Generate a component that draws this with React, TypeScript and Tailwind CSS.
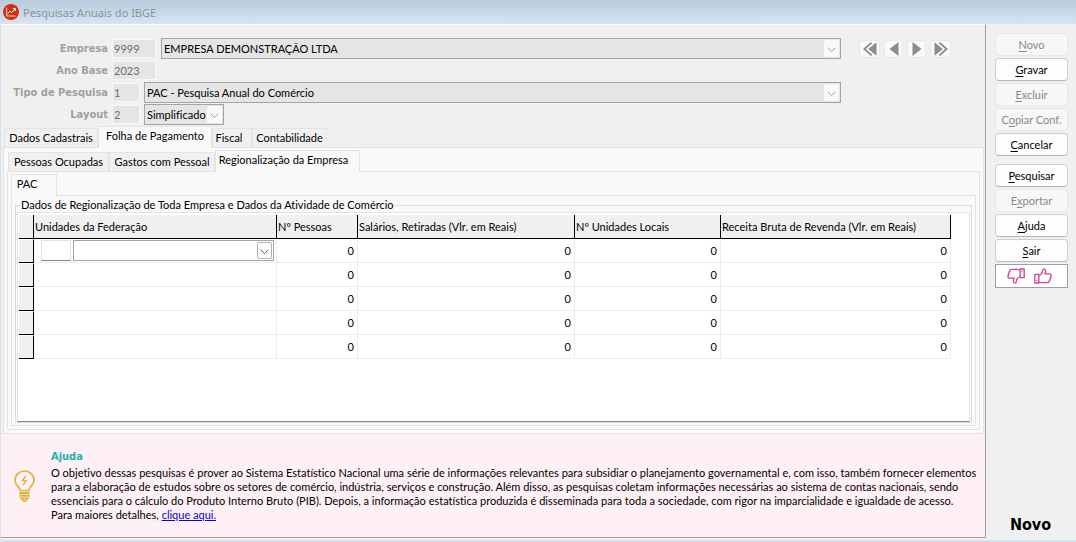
import type { ReactNode } from "react";

function Chevron({ muted }: { muted?: boolean }) {
  return (
    <svg viewBox="0 0 9 6" className="h-[6px] w-[9px]" fill="none" stroke={muted ? "#a0a0a0" : "#555555"}>
      <path d="M0.7 0.8 4.5 4.6 8.3 0.8" />
    </svg>
  );
}

function Combo({ id, label, value, disabled, className }: {
  id: string;
  label: string;
  value: string;
  disabled?: boolean;
  className: string;
}) {
  return (
    <span className={`relative flex ${className}`}>
      <select
        id={id}
        aria-label={label}
        disabled={disabled}
        className="h-[21px] w-full appearance-none border border-[#a3a3a8] bg-white pl-[2px] text-black opacity-100 disabled:bg-[#e5e5e5]"
      >
        <option>{value}</option>
      </select>
      <span
        className={`pointer-events-none absolute inset-y-[2px] right-[2px] flex w-[15px] items-center justify-center rounded-[2px] pt-[2px] ${
          disabled ? "bg-[#f9f9f9]" : "border border-[#b4b4b4] bg-[#fdfdfd]"
        }`}
      >
        <Chevron muted={disabled} />
      </span>
    </span>
  );
}

function FieldRow({ id, label, value, inputClass, children }: {
  id: string;
  label: string;
  value: string;
  inputClass: string;
  children?: ReactNode;
}) {
  return (
    <div className="flex h-[21px] items-center">
      <label
        htmlFor={id}
        className="w-[107px] shrink-0 text-right font-['DejaVu_Sans_Condensed','DejaVu_Sans',sans-serif] font-bold text-[#a0a0a0]"
      >
        {label}
      </label>
      <input
        id={id}
        defaultValue={value}
        disabled
        className={`ml-[4px] h-[19px] shrink-0 border border-[#f7f7f7] bg-[#e5e5e5] px-px text-[#6d6d6d] ${inputClass}`}
      />
      {children}
    </div>
  );
}

function Tabs({ items, active }: { items: [string, string][]; active: number }) {
  return (
    <div role="tablist" className="flex h-[22px] items-end">
      {items.map(([text, width], i) => (
        <button
          key={text}
          role="tab"
          aria-selected={i === active}
          className={
            i === active
              ? `relative -mb-px h-[22px] whitespace-nowrap border border-b-0 border-[#e3e3e3] bg-[#f9f9f9] pb-[3px] ${width}`
              : `h-[19px] whitespace-nowrap border border-b-0 border-[#e3e3e3] bg-[#f0f0f0] pb-px ${width}`
          }
        >
          {text}
        </button>
      ))}
    </div>
  );
}

type NavKind = "first" | "prev" | "next" | "last";

function NavButton({ kind, label }: { kind: NavKind; label: string }) {
  const double = kind === "first" || kind === "last";
  const flip = kind === "next" || kind === "last";
  return (
    <button
      type="button"
      aria-label={label}
      disabled
      className={`flex h-[18px] items-center justify-center rounded-[3px] border border-[#e8e8e8] bg-[#f9f9f9] ${
        double ? "w-[21px]" : "w-[19px]"
      }`}
    >
      <svg viewBox="0 0 14 14" className={`h-[14px] w-[14px] shrink-0 ${flip ? "-scale-x-100" : ""}`}>
        {double ? (
          <>
            <path d="M13.5 0.3V13.7L5.2 7Z" fill="#8c8c8c" />
            <path d="M8.6 0.6 1.4 7l7.2 6.4" fill="none" stroke="#8c8c8c" strokeWidth="1.8" />
          </>
        ) : (
          <path d="M11.5 0V14L2.5 7Z" fill="#8c8c8c" />
        )}
      </svg>
    </button>
  );
}

function ActionButton({ before, hot, after, disabled, className = "" }: {
  before?: string;
  hot: string;
  after: string;
  disabled?: boolean;
  className?: string;
}) {
  return (
    <button
      disabled={disabled}
      className={`h-[23px] w-full whitespace-nowrap rounded-[4px] border ${
        disabled
          ? "border-[#e8e8e8] bg-[#f7f7f7] text-[#888888]"
          : "border-[#cfcfcf] border-b-[#b5b5b5] bg-[#fdfdfd] text-black"
      } ${className}`}
    >
      {before}
      <u className="underline-offset-2">{hot}</u>
      {after}
    </button>
  );
}

function Thumb({ down }: { down?: boolean }) {
  return (
    <svg
      viewBox="0 0 18 16"
      className={`h-[16px] w-[18px] ${down ? "rotate-180" : ""}`}
      fill="none"
      stroke="#d6428f"
      strokeWidth="1.3"
      strokeLinejoin="round"
    >
      <path d="M0.8 6.3H4.8V15H0.8Z" />
      <path d="M4.8 7.5C7 6.8 8.7 4.8 8.8 2C8.9 0.6 11.4 0.4 11.6 2.6C11.7 3.9 11.3 5 10.9 5.9H15.8C17.3 5.9 17.6 7.9 16.4 8.4C17.1 9.3 16.8 10.4 15.9 10.7C16.4 11.7 16 12.5 15.1 12.8C15.4 13.9 14.8 14.7 13.7 14.7H8C6.6 14.7 6 13.9 4.8 13.8" />
      <path d="M2.8 12.3V13.3" />
    </svg>
  );
}

const columns: [string, string][] = [
  ["Unidades da Federação", "w-[243px]"],
  ["Nº Pessoas", "w-[81px]"],
  ["Salários, Retiradas (Vlr. em Reais)", "w-[217px]"],
  ["Nº Unidades Locais", "w-[146px]"],
  ["Receita Bruta de Revenda (Vlr. em Reais)", "w-[230px]"],
];

const rows = [
  [0, 0, 0, 0],
  [0, 0, 0, 0],
  [0, 0, 0, 0],
  [0, 0, 0, 0],
  [0, 0, 0, 0],
];

export default function App() {
  return (
    <div className="flex min-h-screen flex-col bg-[#f0f0f0] font-['Lato','Liberation_Sans',sans-serif] text-[11px] leading-[14px] text-black [font-variant-ligatures:none]">
      <header className="flex h-6 items-center gap-[4px] bg-linear-to-b from-[#b9cbdd] to-[#d7e5f2] pl-[3px]">
        <svg viewBox="0 0 16 16" className="h-4 w-4">
          <circle cx="8" cy="8" r="8" fill="#d0310f" />
          <path d="M3.7 3.5V12H12.5" fill="none" stroke="#f6c9bc" />
          <path d="M4.8 9.6 7 7.2 8.8 8.6 12.2 4.8M9.8 4.6H12.3V7" fill="none" stroke="#ffffff" />
        </svg>
        <h1 className="pt-px font-['Noto_Sans',sans-serif] text-[11px] text-[#8b939b]">
          Pesquisas Anuais do IBGE
        </h1>
      </header>

      <div className="flex flex-1 border-b-2 border-l border-[#d5e2ee]">
        <main className="mb-[2px] flex min-w-0 flex-1 flex-col border-t border-r border-b border-t-white border-r-[#a0a0a0] border-b-[#a0a0a0]">
          <form className="flex flex-col gap-px pt-[13px]">
            <FieldRow id="empresa" label="Empresa" value="9999" inputClass="w-[44px]">
              <Combo id="empresa-nome" label="Nome da empresa" value="EMPRESA DEMONSTRAÇÃO LTDA" disabled className="ml-[5px] min-w-0 flex-1" />
              <div className="mr-[34px] ml-[18px] flex gap-[4px]">
                <NavButton kind="first" label="Primeiro" />
                <NavButton kind="prev" label="Anterior" />
                <NavButton kind="next" label="Próximo" />
                <NavButton kind="last" label="Último" />
              </div>
            </FieldRow>
            <FieldRow id="ano" label="Ano Base" value="2023" inputClass="w-[44px]" />
            <FieldRow id="tipo" label="Tipo de Pesquisa" value="1" inputClass="w-[28px]">
              <Combo id="tipo-nome" label="Nome do tipo de pesquisa" value="PAC - Pesquisa Anual do Comércio" disabled className="mr-[144px] ml-[4px] min-w-0 flex-1" />
            </FieldRow>
            <FieldRow id="layout" label="Layout" value="2" inputClass="w-[28px]">
              <Combo id="layout-nome" label="Nome do layout" value="Simplificado" disabled className="ml-[4px] w-[80px]" />
            </FieldRow>
          </form>

          <section className="flex flex-col pr-px pl-[2px]">
            <div className="pl-px">
              <Tabs
                active={1}
                items={[
                  ["Dados Cadastrais", "w-[94px]"],
                  ["Folha de Pagamento", "w-[114px]"],
                  ["Fiscal", "w-[40px] pr-[6px]"],
                  ["Contabilidade", "w-[75px]"],
                ]}
              />
            </div>
            <div className="border border-[#e3e3e3] bg-[#f9f9f9] px-[3px] pt-px pb-[3px]">
              <div className="pl-px">
                <Tabs
                  active={2}
                  items={[
                    ["Pessoas Ocupadas", "w-[101px]"],
                    ["Gastos com Pessoal", "w-[106px]"],
                    ["Regionalização da Empresa", "w-[145px] pr-[8px]"],
                  ]}
                />
              </div>
              <div className="border border-[#e3e3e3] bg-[#f9f9f9] px-[3px] pt-px pb-[3px]">
                <Tabs active={0} items={[["PAC", "w-[46px] pr-[14px]"]]} />
                <div className="border border-[#e3e3e3] bg-[#f9f9f9] px-[3px] pt-[2px] pb-[2px]">
                  <fieldset className="border border-[#dcdcdc] px-px">
                    <legend className="ml-[3px] px-px">
                      Dados de Regionalização de Toda Empresa e Dados da Atividade de Comércio
                    </legend>
                    <div className="h-[210px] overflow-hidden border border-[#e3e3e3] border-b-[#858585] bg-white pt-[2px] pl-px">
                      <table className="w-[932px] table-fixed border-separate border-spacing-0">
                        <thead>
                          <tr className="h-[24px]">
                            <th className="w-[15px] border-r border-b border-black bg-[#f0f0f0]" />
                            {columns.map(([name, width]) => (
                              <th
                                key={name}
                                scope="col"
                                className={`border-r border-b border-black bg-[#f0f0f0] py-0 pr-0 pl-px text-left font-normal whitespace-nowrap ${width}`}
                              >
                                {name}
                              </th>
                            ))}
                          </tr>
                        </thead>
                        <tbody>
                          {rows.map((row, i) => (
                            <tr key={i} className="h-[24px]">
                              <th className="border-t border-r border-b border-t-white border-r-black border-b-black bg-[#f0f0f0] p-0" />
                              <td className="border-r border-b border-[#ececec] p-0">
                                {i === 0 && (
                                  <div className="flex gap-[2px] pr-[2px] pl-[7px]">
                                    <input
                                      aria-label="Código da unidade"
                                      className="h-[21px] w-[30px] border border-[#e3e3e3] border-b-[#858585] bg-white px-px"
                                    />
                                    <Combo id="uf" label="Unidade da Federação" value="" className="flex-1" />
                                  </div>
                                )}
                              </td>
                              {row.map((value, j) => (
                                <td key={j} className="border-r border-b border-[#ececec] py-0 pr-[3px] pl-0 text-right">
                                  {value}
                                </td>
                              ))}
                            </tr>
                          ))}
                        </tbody>
                      </table>
                    </div>
                  </fieldset>
                </div>
              </div>
            </div>
          </section>

          <section className="flex flex-1 items-center gap-[16px] bg-[#fff0f5] pl-[13px]">
            <svg viewBox="0 0 21 32" className="h-[32px] w-[21px] shrink-0" fill="none" stroke="#e0b23a" strokeWidth="1.7" strokeLinejoin="round">
              <path d="M6.2 20.5C6.2 16.8 1 15.6 1 10.2C1 4.8 5.2 1 10.5 1C15.8 1 20 4.8 20 10.2C20 15.6 14.8 16.8 14.8 20.5Z" />
              <path d="M11.8 6 8.2 10.6H12.4L9.2 15" strokeWidth="1.4" />
              <path d="M5.3 23H15.7M5.3 25.8H15.7M6 28.4H15" strokeWidth="1.9" />
              <path d="M8 29.5 10.5 31.3 13 29.5" />
            </svg>
            <div className="whitespace-nowrap">
              <h2 className="mb-[2px] font-['DejaVu_Sans_Condensed','DejaVu_Sans',sans-serif] font-bold text-[#20b2aa]">Ajuda</h2>
              <p>
                O objetivo dessas pesquisas é prover ao Sistema Estatístico Nacional uma série de informações relevantes para subsidiar o planejamento governamental e, com isso, também fornecer elementos
                <br />
                para a elaboração de estudos sobre os setores de comércio, indústria, serviços e construção. Além disso, as pesquisas coletam informações necessárias ao sistema de contas nacionais, sendo
                <br />
                essenciais para o cálculo do Produto Interno Bruto (PIB). Depois, a informação estatística produzida é disseminada para toda a sociedade, com rigor na imparcialidade e igualdade de acesso.
                <br />
                Para maiores detalhes, <a href="#detalhes" className="text-[#0000e0] underline">clique aqui.</a>
              </p>
            </div>
          </section>
        </main>

        <aside className="flex w-[90px] shrink-0 flex-col gap-[2px] pt-[9px] pr-[8px] pl-[9px]">
          <ActionButton hot="N" after="ovo" disabled />
          <ActionButton hot="G" after="ravar" />
          <ActionButton hot="E" after="xcluir" disabled />
          <ActionButton before="C" hot="o" after="piar Conf." disabled />
          <ActionButton hot="C" after="ancelar" />
          <ActionButton hot="P" after="esquisar" className="mt-[6px]" />
          <ActionButton before="E" hot="x" after="portar" disabled />
          <ActionButton hot="A" after="juda" />
          <ActionButton hot="S" after="air" />
          <div className="flex h-[24px] items-center justify-center gap-[9px] border border-[#a0a0a0] bg-white pr-[4px]">
            <button aria-label="Não gostei"><Thumb down /></button>
            <button aria-label="Gostei"><Thumb /></button>
          </div>
          <strong className="mt-auto pr-[2px] pb-[5px] text-center font-['DejaVu_Sans_Condensed','DejaVu_Sans',sans-serif] text-[16px] leading-[20px]">
            Novo
          </strong>
        </aside>
      </div>
    </div>
  );
}
